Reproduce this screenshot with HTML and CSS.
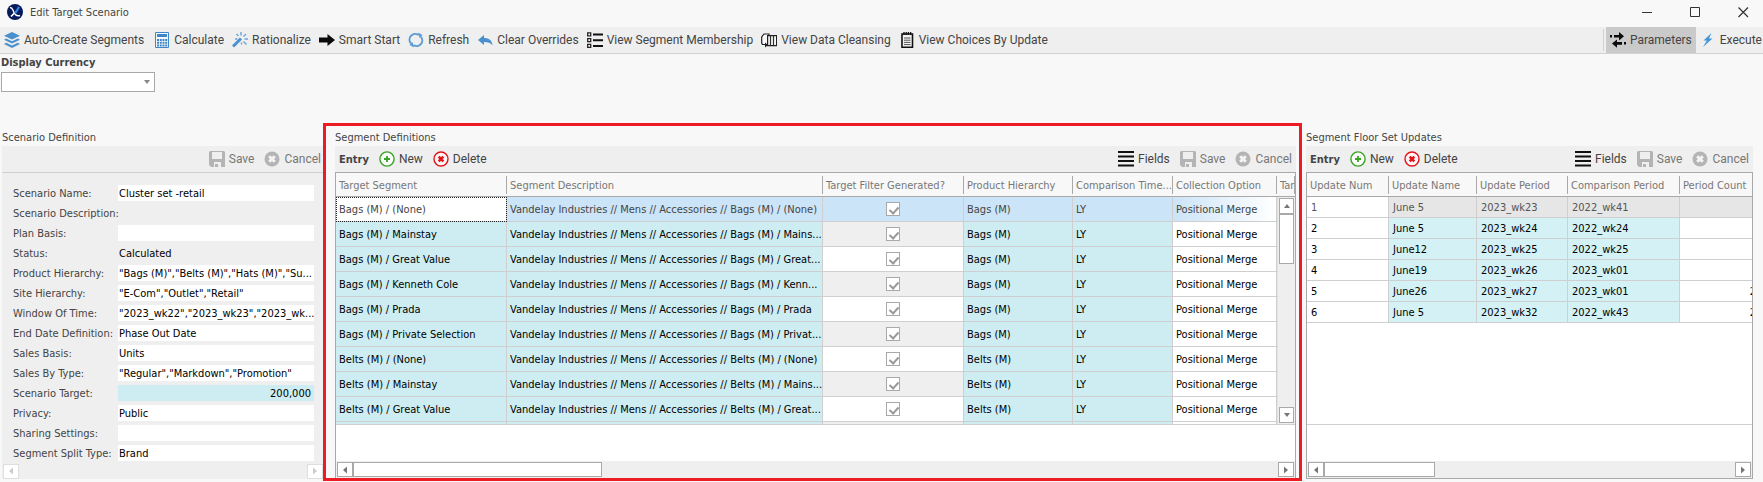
FILE: index.html
```html
<!DOCTYPE html>
<html lang="en">
<head>
<meta charset="utf-8">
<title>Edit Target Scenario</title>
<link rel="stylesheet" href="styles.css">
</head>
<body>
<svg class="defs" aria-hidden="true">
  <symbol id="i-save" viewBox="0 0 16 16"><path fill="#b4b4b4" fill-rule="evenodd" d="M1 0h14l1 1v15H2l-2-2V1zM3 1v7h10V1zM5 11v5h1v-3h3v3h3v-5z"/></symbol>
  <symbol id="i-cancel" viewBox="0 0 16 16"><circle cx="8" cy="8" r="7.5" fill="#b4b4b4"/><path d="M5.2 5.2l5.6 5.6M10.8 5.2l-5.6 5.6" stroke="#f4f4f4" stroke-width="3"/></symbol>
  <symbol id="i-new" viewBox="0 0 16 16"><circle cx="8" cy="8" r="7.1" fill="#fbfdfb" stroke="#38a321" stroke-width="1.4"/><path d="M8 5v6M5 8h6" stroke="#38a321" stroke-width="1.8"/></symbol>
  <symbol id="i-delete" viewBox="0 0 16 16"><circle cx="8" cy="8" r="7" fill="#fdf6f6" stroke="#e31219" stroke-width="1.4"/><path d="M5.7 5.7l4.6 4.6M10.3 5.7l-4.6 4.6" stroke="#e31219" stroke-width="2.6"/></symbol>
  <symbol id="i-fields" viewBox="0 0 16 16"><path d="M0 1h16M0 5.5h16M0 10h16M0 14.5h16" stroke="#111" stroke-width="1.8"/></symbol>
  <symbol id="i-left" viewBox="0 0 14 14"><path d="M9 3.500v7L5 7z" fill="currentColor"/></symbol>
  <symbol id="i-right" viewBox="0 0 14 14"><path d="M5 3.500v7L9 7z" fill="currentColor"/></symbol>
  <symbol id="i-up" viewBox="0 0 14 14"><path d="M4 9h6L7 5z" fill="currentColor"/></symbol>
  <symbol id="i-down" viewBox="0 0 14 14"><path d="M4 5h6L7 9z" fill="currentColor"/></symbol>
</svg>

<header class="titlebar">
  <svg class="logo" viewBox="0 0 16 16"><circle cx="8" cy="8" r="8" fill="#06195c"/><path d="M3 3.500c2.500 0 2.500 2 3.800 4.500 1 2.500 2.500 4.500 6.200 3.500" fill="none" stroke="#fff" stroke-width="1.400"/><path d="M11.800 2.800C11 6 9 7 8.300 9.200" fill="none" stroke="#2f86e0" stroke-width="2.200"/><path d="M7.500 9L4 12.500" stroke="#fff" stroke-width="1.700"/></svg>
  <h1>Edit Target Scenario</h1>
  <div class="window-buttons">
    <button aria-label="Minimize"><svg viewBox="0 0 11 11"><path d="M0 5.500h10" stroke="#333"/></svg></button>
    <button aria-label="Maximize"><svg viewBox="0 0 11 11"><path d="M.5 .5h9v9h-9z" fill="none" stroke="#333"/></svg></button>
    <button aria-label="Close"><svg viewBox="0 0 11 11"><path d="M.5 .5l9.500 9.500M10 .5L.5 10" stroke="#333" stroke-width="1.200"/></svg></button>
  </div>
</header>

<nav class="toolbar">
  <button><svg viewBox="0 0 16 16" fill="#4a90cf"><path d="M8 0l8 3.800-8 3.800-8-3.800zM2.200 6.600L8 9.300l5.800-2.700L16 7.700l-8 3.900-8-3.900zM2.200 10.800L8 13.500l5.800-2.700L16 12l-8 4-8-4z"/></svg>Auto-Create Segments</button>
  <button><svg viewBox="0 0 16 16"><path d="M1.500.500h13v15h-13z" fill="#f4f8fc" stroke="#3f86c8"/><path d="M3 2h10v3H3zM3 7h2v2H3zM5.800 7h2v2h-2zM8.500 7h2v2h-2zM11.200 7h2v2h-2zM3 9.800h2v2H3zM5.800 9.800h2v2h-2zM8.500 9.800h2v2h-2zM11.200 9.800h2v2h-2zM3 12.500h2v2H3zM5.800 12.500h2v2h-2zM8.500 12.500h2v2h-2zM11.200 12.500h2v2h-2z" fill="#3f86c8"/></svg>Calculate</button>
  <button><svg viewBox="0 0 16 16"><path d="M1 14.500L9 6.500" stroke="#4a90cf" stroke-width="3"/><path d="M9 0v3.500M4.500 2l2 2M14 2l-2.500 2.500M12.500 7H16M11.500 9.500l3 3M9.500 10.500v2M3 7h2.500" stroke="#6aa5d8" stroke-width="1.400"/></svg>Rationalize</button>
  <button><svg viewBox="0 0 16 16"><path d="M0 5.500h8.500V2L16 8l-7.500 6v-3.500H0z" fill="#0a0a0a"/></svg>Smart Start</button>
  <button><svg viewBox="0 0 16 16" fill="none" stroke="#5c9cd4" stroke-width="2"><path d="M3 11.500A5.700 5.700 0 0 1 10.500 3M13 4.800A5.700 5.700 0 0 1 5.500 13.200"/><path d="M10 .5l4.500 2.500-3 3zM6 15.500L1.500 13l3-3z" fill="#5c9cd4" stroke="none"/></svg>Refresh</button>
  <button><svg viewBox="0 0 16 16"><path d="M7 3v3c5 0 8 2 8.500 7.500C13.500 10.600 11 10 7 10v3L1 8z" fill="#4a90cf"/></svg>Clear Overrides</button>
  <button><svg viewBox="0 0 16 16"><path d="M6 2.500h10M6 8.200h10M6 14h10" stroke="#111" stroke-width="2"/><path d="M.7.800h3v3h-3zM.7 6.600h3v3h-3zM.7 12.300h3v3h-3z" fill="#fff" stroke="#222" stroke-width="1.300"/></svg>View Segment Membership</button>
  <button><svg viewBox="0 0 16 16"><path d="M6 12.500H1.500L.7 11V5L3 2h5v2" fill="#f8f8f8" stroke="#222" stroke-width="1.200"/><path d="M6.600 3.600h9v10h-9z" fill="#f8f8f8" stroke="#222" stroke-width="1.200"/><path d="M9.500 4v9M12.500 4v9" stroke="#333" stroke-width="1.200"/><path d="M4 10.500l3 2.500-3 2.500z" fill="#222"/></svg>View Data Cleansing</button>
  <button><svg viewBox="0 0 16 16"><path d="M3 2h10.500v13.300H3z" fill="#f4f4f4" stroke="#111" stroke-width="1.600"/><path d="M5 0v3M7.200 0v3M9.400 0v3M11.600 0v3" stroke="#111" stroke-width="1.300"/><path d="M5 6h6.500M5 8.200h6.500M5 10.400h6.500M5 12.600h6.500" stroke="#555"/></svg>View Choices By Update</button>
  <span class="divider"></span>
  <button class="pressed" aria-pressed="true"><svg viewBox="0 0 16 16" fill="#0a0a0a"><path d="M4 3h5V0l5 4.200-5 4.200V5.600H4zM0 3h2v2.500H0zM12 10H7V7.500l-5 4 5 4.300v-3h5zM14 10h2v2.500h-2z"/></svg>Parameters</button>
  <button class="execute"><svg viewBox="0 0 16 16"><path d="M11.500 1L3.500 8.500h3.300L3 15l9.500-8.500H9z" fill="#4596d6"/></svg>Execute</button>
</nav>

<div class="currency">
  <label for="currency">Display Currency</label>
  <div class="combo">
    <select id="currency"><option></option></select>
    <svg viewBox="0 0 6 4"><path d="M0 0h6L3 4z" fill="#888"/></svg>
  </div>
</div>

<main class="workspace">
  <section class="panel scenario">
    <h2>Scenario Definition</h2>
    <div class="panel-bar">
      <button class="muted push"><svg><use href="#i-save"/></svg>Save</button>
      <button class="muted"><svg><use href="#i-cancel"/></svg>Cancel</button>
    </div>
    <form class="fields">
      <label for="f1">Scenario Name:</label><input id="f1" value="Cluster set -retail">
      <label for="f2">Scenario Description:</label><input id="f2" class="plain">
      <label for="f3">Plan Basis:</label><input id="f3">
      <label for="f4">Status:</label><input id="f4" class="plain" value="Calculated" readonly>
      <label for="f5">Product Hierarchy:</label><input id="f5" value="&quot;Bags (M)&quot;,&quot;Belts (M)&quot;,&quot;Hats (M)&quot;,&quot;Su...">
      <label for="f6">Site Hierarchy:</label><input id="f6" value="&quot;E-Com&quot;,&quot;Outlet&quot;,&quot;Retail&quot;">
      <label for="f7">Window Of Time:</label><input id="f7" value="&quot;2023_wk22&quot;,&quot;2023_wk23&quot;,&quot;2023_wk...">
      <label for="f8">End Date Definition:</label><input id="f8" value="Phase Out Date">
      <label for="f9">Sales Basis:</label><input id="f9" value="Units">
      <label for="f10">Sales By Type:</label><input id="f10" value="&quot;Regular&quot;,&quot;Markdown&quot;,&quot;Promotion&quot;">
      <label for="f11">Scenario Target:</label><input id="f11" class="target" value="200,000">
      <label for="f12">Privacy:</label><input id="f12" value="Public">
      <label for="f13">Sharing Settings:</label><input id="f13">
      <label for="f14">Segment Split Type:</label><input id="f14" value="Brand">
    </form>
    <div class="hscroll faint">
      <button aria-label="Scroll left"><svg><use href="#i-left"/></svg></button>
      <button class="push" aria-label="Scroll right"><svg><use href="#i-right"/></svg></button>
    </div>
  </section>

  <section class="panel segments">
    <h2>Segment Definitions</h2>
    <div class="panel-bar">
      <strong>Entry</strong>
      <button><svg><use href="#i-new"/></svg>New</button>
      <button><svg><use href="#i-delete"/></svg>Delete</button>
      <button class="push"><svg><use href="#i-fields"/></svg>Fields</button>
      <button class="muted"><svg><use href="#i-save"/></svg>Save</button>
      <button class="muted"><svg><use href="#i-cancel"/></svg>Cancel</button>
    </div>
    <div class="grid">
      <div class="viewport">
        <table class="segment-table">
          <colgroup><col class="c-target"><col><col class="c-filter"><col class="c-product"><col class="c-time"><col class="c-option"><col class="c-last"></colgroup>
          <thead><tr><th>Target Segment</th><th>Segment Description</th><th>Target Filter Generated?</th><th>Product Hierarchy</th><th>Comparison Time...</th><th>Collection Option</th><th>Tar</th></tr></thead>
          <tbody>
            <tr class="selected"><td>Bags (M) / (None)</td><td>Vandelay Industries // Mens // Accessories // Bags (M) / (None)</td><td><input type="checkbox" checked aria-label="Target filter generated"></td><td>Bags (M)</td><td>LY</td><td>Positional Merge</td><td></td></tr>
            <tr><td>Bags (M) / Mainstay</td><td>Vandelay Industries // Mens // Accessories // Bags (M) / Mains...</td><td><input type="checkbox" checked aria-label="Target filter generated"></td><td>Bags (M)</td><td>LY</td><td>Positional Merge</td><td></td></tr>
            <tr><td>Bags (M) / Great Value</td><td>Vandelay Industries // Mens // Accessories // Bags (M) / Great...</td><td><input type="checkbox" checked aria-label="Target filter generated"></td><td>Bags (M)</td><td>LY</td><td>Positional Merge</td><td></td></tr>
            <tr><td>Bags (M) / Kenneth Cole</td><td>Vandelay Industries // Mens // Accessories // Bags (M) / Kenn...</td><td><input type="checkbox" checked aria-label="Target filter generated"></td><td>Bags (M)</td><td>LY</td><td>Positional Merge</td><td></td></tr>
            <tr><td>Bags (M) / Prada</td><td>Vandelay Industries // Mens // Accessories // Bags (M) / Prada</td><td><input type="checkbox" checked aria-label="Target filter generated"></td><td>Bags (M)</td><td>LY</td><td>Positional Merge</td><td></td></tr>
            <tr><td>Bags (M) / Private Selection</td><td>Vandelay Industries // Mens // Accessories // Bags (M) / Privat...</td><td><input type="checkbox" checked aria-label="Target filter generated"></td><td>Bags (M)</td><td>LY</td><td>Positional Merge</td><td></td></tr>
            <tr><td>Belts (M) / (None)</td><td>Vandelay Industries // Mens // Accessories // Belts (M) / (None)</td><td><input type="checkbox" checked aria-label="Target filter generated"></td><td>Belts (M)</td><td>LY</td><td>Positional Merge</td><td></td></tr>
            <tr><td>Belts (M) / Mainstay</td><td>Vandelay Industries // Mens // Accessories // Belts (M) / Mains...</td><td><input type="checkbox" checked aria-label="Target filter generated"></td><td>Belts (M)</td><td>LY</td><td>Positional Merge</td><td></td></tr>
            <tr><td>Belts (M) / Great Value</td><td>Vandelay Industries // Mens // Accessories // Belts (M) / Great...</td><td><input type="checkbox" checked aria-label="Target filter generated"></td><td>Belts (M)</td><td>LY</td><td>Positional Merge</td><td></td></tr>
            <tr><td></td><td></td><td></td><td></td><td></td><td></td><td></td></tr>
          </tbody>
        </table>
        <div class="vscroll">
          <button aria-label="Scroll up"><svg><use href="#i-up"/></svg></button>
          <span class="thumb"></span>
          <button class="drop" aria-label="Scroll down"><svg><use href="#i-down"/></svg></button>
        </div>
      </div>
      <div class="hscroll">
        <button aria-label="Scroll left"><svg><use href="#i-left"/></svg></button>
        <span class="thumb"></span>
        <button class="push" aria-label="Scroll right"><svg><use href="#i-right"/></svg></button>
      </div>
    </div>
  </section>

  <section class="panel updates">
    <h2>Segment Floor Set Updates</h2>
    <div class="panel-bar">
      <strong>Entry</strong>
      <button><svg><use href="#i-new"/></svg>New</button>
      <button><svg><use href="#i-delete"/></svg>Delete</button>
      <button class="push"><svg><use href="#i-fields"/></svg>Fields</button>
      <button class="muted"><svg><use href="#i-save"/></svg>Save</button>
      <button class="muted"><svg><use href="#i-cancel"/></svg>Cancel</button>
    </div>
    <div class="grid">
      <div class="viewport">
        <table class="update-table">
          <thead><tr><th class="u-num">Update Num</th><th class="u-name">Update Name</th><th class="u-period">Update Period</th><th class="u-comp">Comparison Period</th><th class="u-count">Period Count</th></tr></thead>
          <tbody>
            <tr class="current"><td>1</td><td>June 5</td><td>2023_wk23</td><td>2022_wk41</td><td></td></tr>
            <tr><td>2</td><td>June 5</td><td>2023_wk24</td><td>2022_wk24</td><td></td></tr>
            <tr><td>3</td><td>June12</td><td>2023_wk25</td><td>2022_wk25</td><td></td></tr>
            <tr><td>4</td><td>June19</td><td>2023_wk26</td><td>2023_wk01</td><td></td></tr>
            <tr><td>5</td><td>June26</td><td>2023_wk27</td><td>2023_wk01</td><td>2</td></tr>
            <tr><td>6</td><td>June 5</td><td>2023_wk32</td><td>2022_wk43</td><td>2</td></tr>
          </tbody>
        </table>
      </div>
      <div class="hscroll short">
        <button aria-label="Scroll left"><svg><use href="#i-left"/></svg></button>
        <span class="thumb"></span>
        <button class="push" aria-label="Scroll right"><svg><use href="#i-right"/></svg></button>
      </div>
    </div>
  </section>
</main>
</body>
</html>
```
FILE: styles.css
```css
* { box-sizing: border-box; }

body {
  margin: 0;
  min-height: 100vh;
  display: flex;
  flex-direction: column;
  background: #f8f8f8;
  color: #444;
  font-family: "DejaVu Sans Condensed", "DejaVu Sans", sans-serif;
  font-size: 11px;
}

button, input, select { font: inherit; color: inherit; }
button { border: 0; background: none; padding: 0; margin: 0; }
.defs { display: none; }
.push { margin-left: auto; }

/* Title bar */
.titlebar {
  height: 27px;
  display: flex;
  align-items: center;
  padding: 0 14px 3px 7px;
}
.logo { width: 16px; height: 16px; }
h1 { margin: 0 0 0 7px; font-size: 11px; font-weight: normal; }
.window-buttons { margin-left: auto; display: flex; gap: 37px; }
.window-buttons button { display: flex; }
.window-buttons svg { width: 11px; height: 11px; }

/* Main toolbar */
.toolbar {
  height: 27px;
  display: flex;
  align-items: stretch;
  background: #efefef;
  border-bottom: 1px solid #d2d2d2;
}
.toolbar button, .panel-bar button {
  display: flex;
  align-items: center;
  gap: 4px;
  padding: 0 5px;
  font-family: Roboto, sans-serif;
  font-size: 12px;
  white-space: nowrap;
}
.toolbar button { padding: 0 4px; }
.toolbar button:first-child { padding-right: 6px; }
.toolbar svg, .panel-bar svg { width: 16px; height: 16px; flex: none; }
.toolbar .divider { width: 1px; margin: 2px 2px 2px auto; background: #d0d0d0; }
.toolbar .pressed { background: #cacaca; }
.toolbar .execute { padding-right: 1px; }

/* Currency selector */
.currency {
  display: flex;
  flex-direction: column;
  align-items: flex-start;
  padding: 0 1px 31px;
}
.currency label { height: 18px; line-height: 18px; font-weight: bold; }
.combo { position: relative; }
.combo select {
  display: block;
  width: 154px;
  height: 20px;
  appearance: none;
  border: 1px solid #a9a9a9;
  border-radius: 0;
  background: #fff;
}
.combo svg { position: absolute; right: 5px; top: 8px; width: 6px; height: 4px; pointer-events: none; }

/* Panels */
.workspace {
  flex: 1;
  display: grid;
  grid-template-columns: minmax(0, 323fr) minmax(0, 979fr) minmax(0, 461fr);
  padding-bottom: 1px;
}
.panel { display: flex; flex-direction: column; min-width: 0; padding-top: 3px; padding-bottom: 2px; }
.panel h2 { margin: 0; height: 20px; line-height: 24px; font-size: 11px; font-weight: normal; }
.panel-bar {
  height: 26px;
  display: flex;
  align-items: center;
  padding-left: 4px;
  background: #efefef;
}
.panel-bar strong { font-size: 11px; margin-right: 5px; }
.panel-bar .muted { color: #777; }
.panel-bar button:last-child { padding-right: 4px; }
.scenario { padding-left: 2px; }
.segments { border: 3px solid #ed1c24; padding: 0 3px 0 9px; }
.updates { padding-left: 4px; padding-right: 10px; }
.scenario .panel-bar button:last-child { padding-right: 2px; }

/* Scenario form */
.fields {
  flex: 1;
  display: grid;
  grid-template-columns: 105px minmax(0, 1fr);
  grid-auto-rows: 20px;
  align-items: center;
  padding: 10px 9px 0 11px;
  background: #efefef;
  border-top: 1px solid #d0d0d0;
}
.fields label { white-space: nowrap; }
.fields input {
  width: 100%;
  height: 16px;
  border: 0;
  padding: 0 0 0 1px;
  background: #fff;
  color: #000;
}
.fields input.plain { background: none; }
.fields input.target { background: #cdedf2; text-align: right; padding-right: 3px; }

/* Grids */
.grid {
  flex: 1;
  display: flex;
  flex-direction: column;
  background: #fff;
  border: 1px solid #a9a9a9;
}
.segments .grid { border-bottom: 0; }
.viewport {
  position: relative;
  flex: 1 0 0;
  overflow: hidden;
  margin-bottom: 36px;
  border-bottom: 1px solid #cfcfcf;
}
table { border-collapse: separate; border-spacing: 0; table-layout: fixed; width: 100%; }
th {
  height: 24px;
  padding: 2px 0 0 3px;
  text-align: left;
  font-weight: normal;
  color: #777;
  white-space: nowrap;
  overflow: hidden;
  background: linear-gradient(#a9a9a9, #a9a9a9) right center / 1px 18px no-repeat #f8f8f8;
  border-bottom: 1px solid #a9a9a9;
}
td {
  height: 25px;
  padding: 1px 0 0 3px;
  color: #000;
  white-space: nowrap;
  overflow: hidden;
  border-right: 1px solid #cfcfcf;
  border-bottom: 1px solid #cfcfcf;
}
.c-target { width: 171px; }
.c-filter { width: 141px; }
.c-product { width: 109px; }
.c-time { width: 100px; }
.c-option { width: 104px; }
.c-last { width: 18px; }
.segment-table td { background: #cdedf2; }
.segment-table td:nth-child(3) { background: #fff; text-align: center; padding: 0; }
.segment-table tr:nth-child(even) td:nth-child(3) { background: #efefef; }
.segment-table td:nth-child(6) { background: #fff; }
.segment-table .selected td, .segment-table .selected td:nth-child(3) { background: #cce4f7; color: #444; }
.segment-table .selected td:first-child { background: #fff; outline: 1px dotted #222; outline-offset: -1px; }
.segment-table .selected td:nth-child(6) { background: linear-gradient(to right, #cce4f7, #fff); }

td input {
  appearance: none;
  display: inline-block;
  position: relative;
  width: 14px;
  height: 14px;
  margin: 0;
  border: 1px solid #a9a9a9;
  background: #fff;
  vertical-align: middle;
}
td input:checked::before {
  content: "";
  position: absolute;
  left: 4px;
  top: 2px;
  width: 4px;
  height: 7px;
  border: solid #999;
  border-width: 0 2px 2px 0;
  transform: rotate(42deg);
}

.update-table { width: 453px; }
.u-num { width: 82px; }
.u-name { width: 88px; }
.u-period { width: 91px; }
.u-comp { width: 112px; }
.u-count { width: 80px; }
.update-table td { height: 21px; padding-left: 4px; background: #d4f1f5; }
.update-table td:first-child, .update-table td:last-child { background: #fff; }
.update-table td:last-child { text-align: right; padding-right: 3px; }
.update-table .current td { background: #e6e6e6; color: #555; }
.update-table .current td:first-child { background: #fff; }
.update-table .current td:last-child { background: #e6e6e6; }

/* Scroll bars */
.hscroll { height: 17px; display: flex; align-items: center; padding: 0 1px; background: #efefef; }
.hscroll button, .vscroll button {
  flex: none;
  width: 16px;
  height: 15px;
  display: flex;
  align-items: center;
  justify-content: center;
  color: #777;
  background: #fff;
  border: 1px solid #a9a9a9;
}
.hscroll button svg, .vscroll button svg { width: 14px; height: 14px; flex: none; }
.hscroll .thumb { width: 26%; height: 15px; background: #fff; border: 1px solid #a9a9a9; }
.hscroll.short .thumb { width: 25%; }
.hscroll.faint { height: 16px; padding-right: 0; }
.hscroll.faint button { border-color: #dedede; color: #ccc; }
.vscroll {
  position: absolute;
  top: 24px;
  right: 0;
  bottom: 0;
  width: 17px;
  padding: 1px;
  display: flex;
  flex-direction: column;
  background: #efefef;
}
.vscroll button { width: 15px; height: 16px; }
.vscroll .thumb { height: 50px; background: #fff; border: 1px solid #a9a9a9; }
.vscroll .drop { margin-top: auto; }
```
